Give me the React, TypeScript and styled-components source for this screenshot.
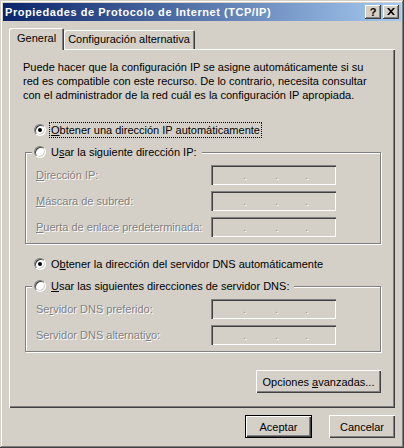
import React from "react";
import styled, { createGlobalStyle } from "styled-components";

const Global = createGlobalStyle`
  html, body { margin: 0; padding: 0; background: #d4d0c8; }
  body { font-family: "Liberation Sans", Arial, sans-serif; font-size: 11px; color: #000; }
  * { box-sizing: border-box; }
`;

const Window = styled.div`
  width: 404px;
  height: 448px;
  padding: 3px;
  background: #d4d0c8;
  box-shadow: inset -1px -1px #404040, inset 1px 1px #d4d0c8, inset -2px -2px #808080, inset 2px 2px #fff;
  display: flex;
  flex-direction: column;
`;

const TitleBar = styled.div`
  height: 18px;
  flex: none;
  display: flex;
  align-items: center;
  justify-content: space-between;
  padding: 0 2px 0 2px;
  background: linear-gradient(to right, #0a246a, #a6caf0);
`;

const Title = styled.span`
  color: #fff;
  font-weight: bold;
  font-size: 11px;
  letter-spacing: 0.55px;
  white-space: nowrap;
`;

const CaptionButtons = styled.div`
  display: flex;
  gap: 2px;
`;

const CaptionButton = styled.div`
  width: 16px;
  height: 14px;
  background: #d4d0c8;
  box-shadow: inset -1px -1px #404040, inset 1px 1px #fff, inset -2px -2px #808080;
  display: flex;
  align-items: center;
  justify-content: center;
  font-weight: bold;
  font-size: 11px;
  line-height: 14px;
  padding-bottom: 1px;
`;

const Body = styled.div`
  flex: 1;
  display: flex;
  flex-direction: column;
  padding: 7px 6px 0 6px;
`;

const TabStrip = styled.div`
  display: flex;
  align-items: flex-end;
  height: 21px;
`;

const Tab = styled.div<{ $active?: boolean }>`
  position: relative;
  z-index: ${(p) => (p.$active ? 1 : 0)};
  height: ${(p) => (p.$active ? 22 : 19)}px;
  margin-bottom: ${(p) => (p.$active ? -1 : 0)}px;
  padding: ${(p) => (p.$active ? "3px 8px 0 8px" : "2px 5px 0 4px")};
  background: #d4d0c8;
  border-top-left-radius: 2px;
  border-top-right-radius: 2px;
  box-shadow: inset 1px 1px #fff, inset -1px 0 #404040, inset -2px 0 #808080;
  white-space: nowrap;
  line-height: 14px;
`;

const Panel = styled.div`
  height: 359px;
  flex: none;
  background: #d4d0c8;
  box-shadow: inset 1px 1px #fff, inset -1px -1px #404040, inset -2px -2px #808080;
  padding: 11px 14px 0 16px;
  display: flex;
  flex-direction: column;
`;

const Description = styled.p`
  margin: 0 0 0 -2px;
  line-height: 14px;
  height: 42px;
`;

const RadioRow = styled.div<{ $gap: number }>`
  display: flex;
  align-items: center;
  height: 16px;
  margin-top: ${(p) => p.$gap}px;
  padding-left: 9px;
  gap: 4px;
`;

const RadioCircle = styled.span<{ $checked?: boolean }>`
  width: 12px;
  height: 12px;
  flex: none;
  border-radius: 50%;
  background: #fff;
  border: 1px solid;
  border-color: #808080 #fff #fff #808080;
  box-shadow: inset 1px 1px #404040, inset -1px -1px #d4d0c8;
  display: flex;
  align-items: center;
  justify-content: center;
  &::after {
    content: "";
    width: 4px;
    height: 4px;
    border-radius: 50%;
    background: #000;
    display: ${(p) => (p.$checked ? "block" : "none")};
  }
`;

const RadioLabel = styled.span<{ $focused?: boolean }>`
  padding: 0 1px;
  line-height: 14px;
  white-space: nowrap;
  outline: ${(p) => (p.$focused ? "1px dotted #000" : "none")};
`;

const Group = styled.fieldset<{ $gap: number }>`
  margin: ${(p) => p.$gap}px 0 0 0;
  padding: 6px 10px 6px 10px;
  border: 1px solid #808080;
  box-shadow: inset 1px 1px #fff, 1px 1px #fff;
  min-width: 0;
`;

const Legend = styled.legend`
  margin-left: -4px;
  padding: 0 4px 0 2px;
  background: #d4d0c8;
  display: flex;
  align-items: center;
  gap: 4px;
  height: 14px;
  line-height: 14px;
`;

const Fields = styled.div`
  display: grid;
  grid-template-columns: 175px 125px;
  row-gap: 6px;
  align-items: center;
`;

const FieldLabel = styled.span`
  color: #808080;
  text-shadow: 1px 1px 0 #fff;
  white-space: nowrap;
`;

const IpBox = styled.div`
  height: 20px;
  width: 125px;
  background: #d4d0c8;
  box-shadow: inset 1px 1px #808080, inset 2px 2px #404040, inset -1px -1px #fff, inset -2px -2px #d4d0c8;
  display: flex;
  align-items: center;
  padding-left: 32px;
`;

const IpDot = styled.span`
  width: 32px;
  flex: none;
  color: #9a9a9a;
  text-shadow: 1px 1px 0 #fff;
  line-height: 14px;
  &:nth-child(2) { width: 30px; }
`;

const AdvRow = styled.div`
  display: flex;
  justify-content: flex-end;
  margin-top: 18px;
`;

const Button = styled.button<{ $w: number; $default?: boolean }>`
  width: ${(p) => p.$w}px;
  height: 23px;
  font: inherit;
  font-size: 11px;
  color: #000;
  background: #d4d0c8;
  padding: 0;
  border: ${(p) => (p.$default ? "1px solid #000" : "none")};
  box-shadow: inset 1px 1px #fff, inset -1px -1px #404040, inset -2px -2px #808080;
  cursor: default;
`;

const Footer = styled.div`
  display: flex;
  justify-content: flex-end;
  gap: 17px;
  margin-top: 7px;
`;

const U = styled.span`
  text-decoration: underline;
  text-underline-offset: 1px;
`;

const Ip = () => (
  <IpBox>
    <IpDot>.</IpDot>
    <IpDot>.</IpDot>
    <IpDot>.</IpDot>
  </IpBox>
);

export default function App() {
  return (
    <>
      <Global />
      <Window>
        <TitleBar>
          <Title>Propiedades de Protocolo de Internet (TCP/IP)</Title>
          <CaptionButtons>
            <CaptionButton>?</CaptionButton>
            <CaptionButton>
              <svg width="8" height="7" viewBox="0 0 8 7">
                <path d="M0 0h2l2 2.2L6 0h2L5 3.5 8 7H6L4 4.8 2 7H0l3-3.5z" fill="#000" />
              </svg>
            </CaptionButton>
          </CaptionButtons>
        </TitleBar>
        <Body>
          <TabStrip>
            <Tab $active>General</Tab>
            <Tab>Configuración alternativa</Tab>
          </TabStrip>
          <Panel>
            <Description>
              Puede hacer que la configuración IP se asigne automáticamente si su red es compatible con este recurso. De lo contrario, necesita consultar con el administrador de la red cuál es la configuración IP apropiada.
            </Description>
            <RadioRow $gap={20}>
              <RadioCircle $checked />
              <RadioLabel $focused>
                <U>O</U>btener una dirección IP automáticamente
              </RadioLabel>
            </RadioRow>
            <Group $gap={7}>
              <Legend>
                <RadioCircle />
                <RadioLabel>
                  U<U>s</U>ar la siguiente dirección IP:
                </RadioLabel>
              </Legend>
              <Fields>
                <FieldLabel>
                  <U>D</U>irección IP:
                </FieldLabel>
                <Ip />
                <FieldLabel>
                  <U>M</U>áscara de subred:
                </FieldLabel>
                <Ip />
                <FieldLabel>
                  <U>P</U>uerta de enlace predeterminada:
                </FieldLabel>
                <Ip />
              </Fields>
            </Group>
            <RadioRow $gap={12}>
              <RadioCircle $checked />
              <RadioLabel>
                O<U>b</U>tener la dirección del servidor DNS automáticamente
              </RadioLabel>
            </RadioRow>
            <Group $gap={7}>
              <Legend>
                <RadioCircle />
                <RadioLabel>
                  <U>U</U>sar las siguientes direcciones de servidor DNS:
                </RadioLabel>
              </Legend>
              <Fields>
                <FieldLabel>
                  Se<U>r</U>vidor DNS preferido:
                </FieldLabel>
                <Ip />
                <FieldLabel>
                  Servidor DNS alternati<U>v</U>o:
                </FieldLabel>
                <Ip />
              </Fields>
            </Group>
            <AdvRow>
              <Button $w={125}>
                Opciones <U>a</U>vanzadas...
              </Button>
            </AdvRow>
          </Panel>
          <Footer>
            <Button $w={67} $default>
              Aceptar
            </Button>
            <Button $w={66}>Cancelar</Button>
          </Footer>
        </Body>
      </Window>
    </>
  );
}
